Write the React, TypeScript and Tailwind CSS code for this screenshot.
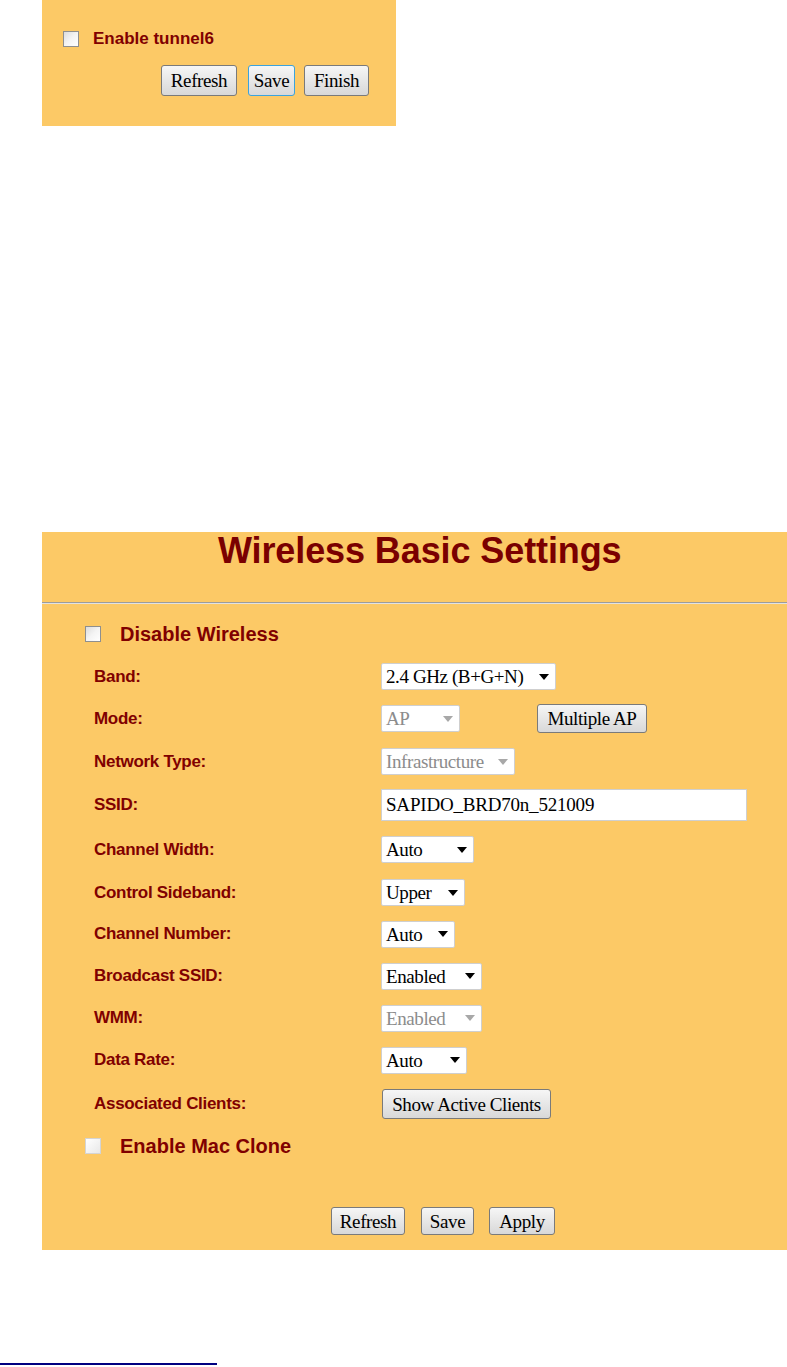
const sans = { fontFamily: '"Liberation Sans", Arial, sans-serif' };

function Box({ light = false }: { light?: boolean }) {
  return (
    <span
      className={
        light
          ? "block w-[16px] h-[16px] border border-[#d4d4d4] bg-linear-to-br from-[#ffffff] to-[#e8e8e8]"
          : "block w-[16px] h-[16px] border border-[#8e8f8f] bg-linear-to-br from-[#dcdcdc] via-[#f4f4f4] to-[#ffffff]"
      }
    />
  );
}

function Btn({ label, w, focus = false }: { label: string; w: string; focus?: boolean }) {
  return (
    <button
      type="button"
      className={`${w} h-full rounded-[3px] border ${
        focus ? "border-[#3ba3dd]" : "border-[#7a7a7a]"
      } bg-linear-to-b from-[#f6f6f6] to-[#d8d8d8] font-['Liberation_Serif',serif] text-[19px] leading-none text-black tracking-[-0.4px]`}
    >
      {label}
    </button>
  );
}

function Sel({ text, w, disabled = false }: { text: string; w: string; disabled?: boolean }) {
  return (
    <div
      className={`${w} h-[27px] bg-white border border-[#cfcfcf] rounded-[2px] flex items-center justify-between pl-[4px] pr-[6px]`}
    >
      <span
        className={`font-['Liberation_Serif',serif] text-[19px] leading-none tracking-[-0.4px] whitespace-nowrap ${
          disabled ? "text-[#8c8c8c]" : "text-black"
        }`}
      >
        {text}
      </span>
      <svg width="10" height="6" viewBox="0 0 10 6">
        <path d="M0 0h10L5 6z" fill={disabled ? "#a8a8a8" : "#000"} />
      </svg>
    </div>
  );
}

const rows = [
  { label: "Band:", h: "h-[41px]", ctl: <Sel text="2.4 GHz (B+G+N)" w="w-[175px]" /> },
  {
    label: "Mode:",
    h: "h-[43px]",
    ctl: (
      <div className="flex items-center gap-[77px]">
        <Sel text="AP" w="w-[79px]" disabled />
        <div className="h-[29px]">
          <Btn label="Multiple AP" w="w-[110px]" />
        </div>
      </div>
    ),
  },
  { label: "Network Type:", h: "h-[43px]", ctl: <Sel text="Infrastructure" w="w-[134px]" disabled /> },
  {
    label: "SSID:",
    h: "h-[44px]",
    ctl: (
      <div className="w-[366px] h-[32px] bg-white border border-[#cfcfcf] flex items-center pl-[4px] font-['Liberation_Serif',serif] text-[19px] tracking-[-0.2px] text-black">
        SAPIDO_BRD70n_521009
      </div>
    ),
  },
  { label: "Channel Width:", h: "h-[45px]", ctl: <Sel text="Auto" w="w-[93px]" /> },
  { label: "Control Sideband:", h: "h-[41px]", ctl: <Sel text="Upper" w="w-[84px]" /> },
  { label: "Channel Number:", h: "h-[42px]", ctl: <Sel text="Auto" w="w-[74px]" /> },
  { label: "Broadcast SSID:", h: "h-[42px]", ctl: <Sel text="Enabled" w="w-[101px]" /> },
  { label: "WMM:", h: "h-[42px]", ctl: <Sel text="Enabled" w="w-[101px]" disabled /> },
  { label: "Data Rate:", h: "h-[42px]", ctl: <Sel text="Auto" w="w-[86px]" /> },
  {
    label: "Associated Clients:",
    h: "h-[46px]",
    ctl: (
      <div className="h-[30px] ml-[1px]">
        <Btn label="Show Active Clients" w="w-[169px]" />
      </div>
    ),
  },
];

export default function App() {
  return (
    <div className="min-h-[1367px] bg-white pt-0" style={sans}>
      {/* tunnel panel */}
      <div className="ml-[42px] w-[354px] h-[126px] bg-[#fcc966] pt-[30px]">
        <div className="flex items-center h-[18px] pl-[21px]">
          <Box />
          <span className="ml-[14px] text-[17px] font-bold text-[#800000]">Enable tunnel6</span>
        </div>
        <div className="flex h-[31px] mt-[17px] pl-[119px]">
          <Btn label="Refresh" w="w-[76px]" />
          <div className="ml-[11px] h-full">
            <Btn label="Save" w="w-[47px]" focus />
          </div>
          <div className="ml-[9px] h-full">
            <Btn label="Finish" w="w-[65px]" />
          </div>
        </div>
      </div>

      {/* wireless panel */}
      <div className="mt-[406px] ml-[42px] h-[718px] bg-[#fcc966]">
        <div className="h-[70px] pl-[176px]">
          <h1 className="text-[36px] leading-[38px] font-bold text-[#7a0000] tracking-[-0.1px]">
            Wireless Basic Settings
          </h1>
        </div>
        <div className="border-t border-t-[#9c9c9c] border-b border-b-[#e2e2e2]" />

        <div className="flex items-center h-[20px] mt-[20px] pl-[43px]">
          <Box />
          <span className="ml-[19px] text-[20px] font-bold text-[#800000]">Disable Wireless</span>
        </div>

        <div className="mt-[12px]">
          {rows.map((r) => (
            <div key={r.label} className={`flex items-center ${r.h} pl-[52px]`}>
              <span className="w-[287px] text-[17px] font-bold text-[#800000] tracking-[-0.3px]">
                {r.label}
              </span>
              {r.ctl}
            </div>
          ))}
        </div>

        <div className="flex items-center h-[20px] mt-[9px] pl-[43px]">
          <Box light />
          <span className="ml-[19px] text-[20px] font-bold text-[#800000]">Enable Mac Clone</span>
        </div>

        <div className="flex h-[28px] mt-[51px] pl-[289px]">
          <Btn label="Refresh" w="w-[74px]" />
          <div className="ml-[16px] h-full">
            <Btn label="Save" w="w-[53px]" />
          </div>
          <div className="ml-[15px] h-full">
            <Btn label="Apply" w="w-[66px]" />
          </div>
        </div>
      </div>

      <div className="mt-[113px] w-[217px] h-[2px] bg-[#000080]" />
    </div>
  );
}
